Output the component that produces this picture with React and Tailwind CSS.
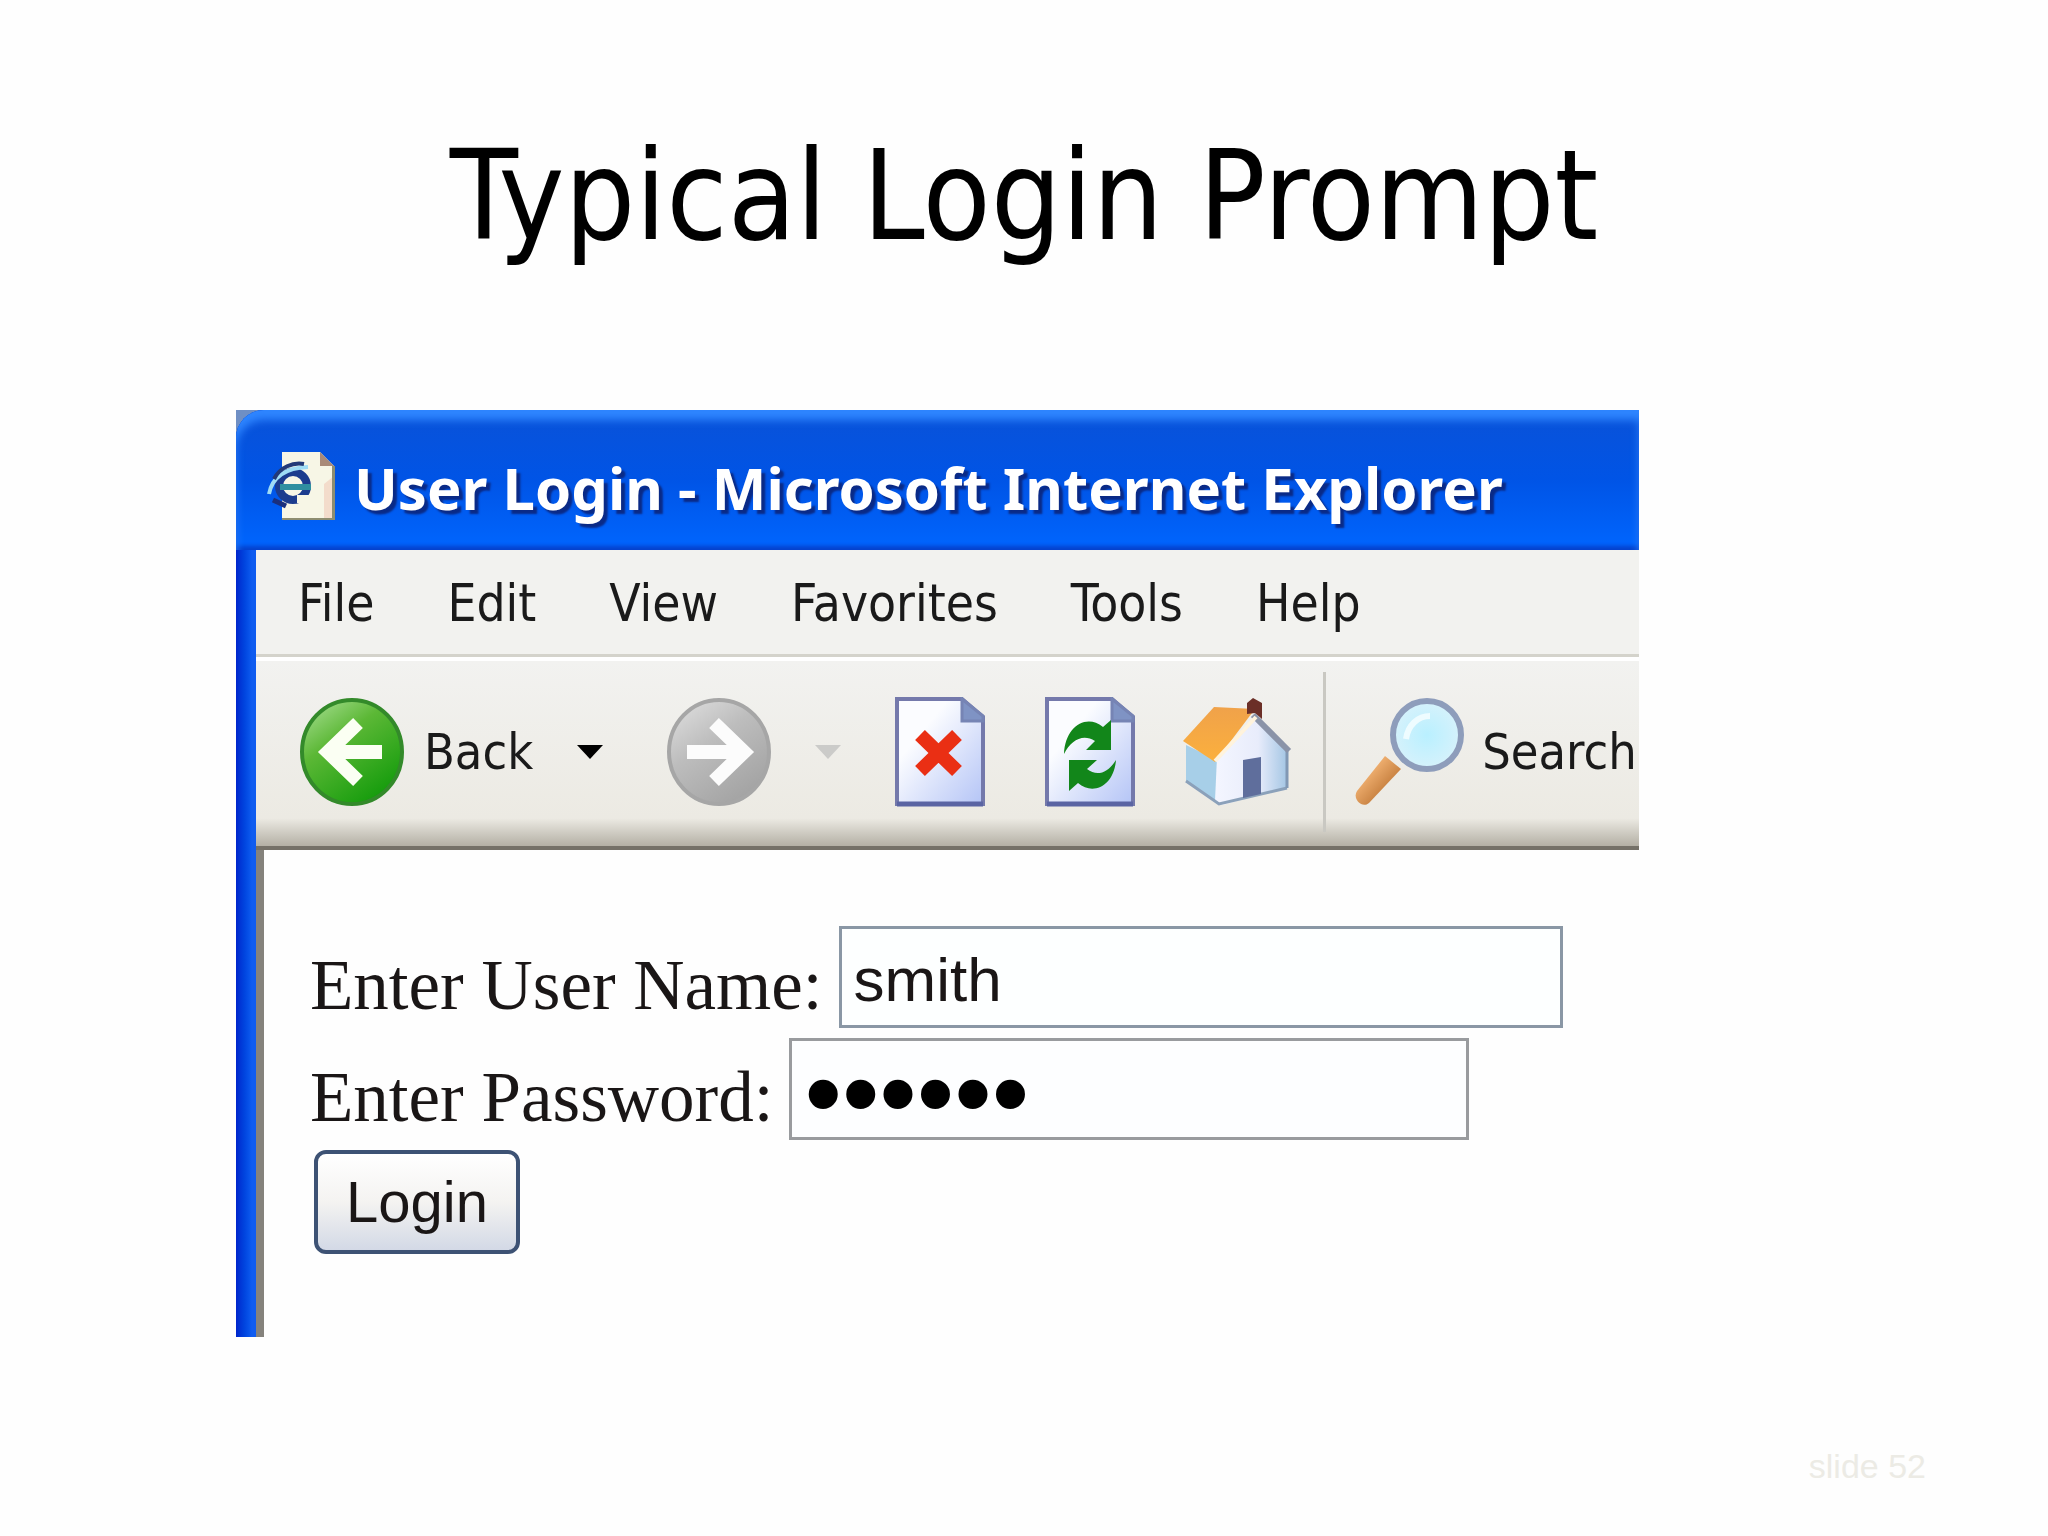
import { useState } from "react";

const MENU = ["File", "Edit", "View", "Favorites", "Tools", "Help"];

function PageIcon() {
  return (
    <svg viewBox="0 0 72 72" className="w-[72px] h-[72px] shrink-0" aria-hidden="true">
      <path d="M16 2H54L68 16V69H16Z" fill="#f7f6e6" />
      <path d="M54 2V16H68Z" fill="#a98a78" />
      <path d="M58 34L68 26V69H58Z" fill="#f3dccb" />
      <path d="M66 16H69V70H16V68H66Z" fill="#8d8d70" />
      <circle cx="27" cy="36" r="14" fill="none" stroke="#1c3c8e" strokeWidth="8" />
      <path d="M14 37H45" stroke="#2f8fa0" strokeWidth="6" />
      <path d="M31 45H46V53H31Z" fill="#f7f6e6" />
      <path d="M3 44C6 28 18 18 42 17" fill="none" stroke="#9fdcf5" strokeWidth="4" />
      <path d="M8 29C14 17 27 12 38 14" fill="none" stroke="#233a78" strokeWidth="4" />
      <path d="M7 50L20 56" stroke="#1a2f7c" strokeWidth="5" />
    </svg>
  );
}

function BackIcon() {
  return (
    <svg viewBox="0 0 104 108" className="w-[104px] h-[108px]" aria-hidden="true">
      <defs>
        <linearGradient id="back" x1="0.15" y1="0.05" x2="0.75" y2="0.95">
          <stop offset="0" stopColor="#9bd883" />
          <stop offset="0.35" stopColor="#5cb836" />
          <stop offset="1" stopColor="#159c0c" />
        </linearGradient>
      </defs>
      <ellipse cx="52" cy="54" rx="50" ry="52" fill="url(#back)" stroke="#338a2a" strokeWidth="4" />
      <path d="M82 54H28M58 25L28 54L58 83" fill="none" stroke="#fbfff3" strokeWidth="14" />
    </svg>
  );
}

function ForwardIcon() {
  return (
    <svg viewBox="0 0 104 108" className="w-[104px] h-[108px]" aria-hidden="true">
      <defs>
        <linearGradient id="forward" x1="0.15" y1="0.05" x2="0.75" y2="0.95">
          <stop offset="0" stopColor="#dadada" />
          <stop offset="0.4" stopColor="#bdbdbd" />
          <stop offset="1" stopColor="#a3a3a3" />
        </linearGradient>
      </defs>
      <ellipse cx="52" cy="54" rx="50" ry="52" fill="url(#forward)" stroke="#a6a6a6" strokeWidth="4" />
      <path d="M20 54H76M47 25L77 54L47 83" fill="none" stroke="#fcfcfc" strokeWidth="14" />
    </svg>
  );
}

function Sheet({ children }) {
  return (
    <svg viewBox="0 0 90 110" className="w-[90px] h-[110px]" aria-hidden="true">
      <defs>
        <linearGradient id="sheet" x1="0" y1="0" x2="1" y2="1">
          <stop offset="0.3" stopColor="#fbfcff" />
          <stop offset="1" stopColor="#b4c4f6" />
        </linearGradient>
      </defs>
      <path d="M2 2H67L88 20V107H2Z" fill="url(#sheet)" stroke="#7479ab" strokeWidth="4" />
      <path d="M67 2V24H88V19Z" fill="#7f93c4" stroke="#7684b4" strokeWidth="3" />
      <path d="M2 107H88" stroke="#5a64a3" strokeWidth="5" />
      {children}
    </svg>
  );
}

function StopIcon() {
  return (
    <Sheet>
      <path d="M25 38L62 74M62 38L25 74" stroke="#ea2f14" strokeWidth="14" />
    </Sheet>
  );
}

function RefreshIcon() {
  return (
    <Sheet>
      <path d="M19 57C20 30 41 16 58 30L66 23V53H41L50 44C38 36 26 43 19 57Z" fill="#12861a" />
      <path d="M71 63C69 89 48 99 33 86L24 94V63H52L42 72C52 80 63 76 71 63Z" fill="#12861a" />
    </Sheet>
  );
}

function HomeIcon() {
  return (
    <svg viewBox="0 0 112 114" className="w-[112px] h-[114px]" aria-hidden="true">
      <defs>
        <linearGradient id="roof" x1="0" y1="0" x2="0" y2="1">
          <stop offset="0" stopColor="#f0a24a" />
          <stop offset="1" stopColor="#fbb03d" />
        </linearGradient>
        <linearGradient id="wall" x1="0" y1="0" x2="1" y2="0">
          <stop offset="0" stopColor="#f4f6ff" />
          <stop offset="0.6" stopColor="#e8ecfb" />
          <stop offset="1" stopColor="#a4c6e4" />
        </linearGradient>
      </defs>
      <path d="M5 50L38 66V110L5 86Z" fill="#a7cfe8" />
      <path d="M36 62L74 24L106 56V92L42 110L34 106Z" fill="url(#wall)" />
      <path d="M5 86L38 109L106 93" fill="none" stroke="#8ba1ba" strokeWidth="3" />
      <path d="M106 54V93" stroke="#8198b4" strokeWidth="3" />
      <path d="M62 65L80 62V99L62 103Z" fill="#5f6e9c" />
      <path d="M72 20L108 56" stroke="#8a93a8" strokeWidth="6" />
      <path d="M2 46L33 12L74 14L34 67Z" fill="url(#roof)" />
      <path d="M34 66L75 22" stroke="#fff3dc" strokeWidth="4" />
      <path d="M66 8L72 3L81 8V24L74 18L66 19Z" fill="#6b2f27" />
    </svg>
  );
}

function SearchIcon() {
  return (
    <svg viewBox="0 0 112 114" className="w-[112px] h-[114px] shrink-0" aria-hidden="true">
      <defs>
        <radialGradient id="lens" cx="0.5" cy="0.5" r="0.55">
          <stop offset="0" stopColor="#b9f0ff" />
          <stop offset="1" stopColor="#d9f2fb" />
        </radialGradient>
        <linearGradient id="grip" x1="0.2" y1="0.2" x2="0.8" y2="0.8">
          <stop offset="0" stopColor="#fbbd7e" />
          <stop offset="1" stopColor="#b9702f" />
        </linearGradient>
      </defs>
      <path d="M31 61L47 74L15 108C8 114 -2 104 3 96Z" fill="url(#grip)" />
      <circle cx="73" cy="40" r="34" fill="url(#lens)" stroke="#8e9dbb" strokeWidth="6" />
      <path d="M52 44C54 30 64 21 76 21" fill="none" stroke="#eefcff" strokeWidth="6" />
    </svg>
  );
}

function Caret({ className }) {
  return (
    <svg viewBox="0 0 26 14" className={className} aria-hidden="true">
      <path d="M0 0H26L13 14Z" fill="currentColor" />
    </svg>
  );
}

export default function App() {
  const [user, setUser] = useState("smith");
  const [password, setPassword] = useState("secret");

  return (
    <div className="min-h-screen flex flex-col bg-[#fefefe] text-black">
      <h1 className="pt-[110px] text-center text-[124px] leading-[172px] font-['DejaVu_Sans_Condensed','DejaVu_Sans',sans-serif]">
        Typical Login Prompt
      </h1>

      <main className="mt-[128px] ml-[236px] w-[68.5%] bg-[#6f8fc4] overflow-hidden">
        <div className="bg-[#0a50e6] rounded-tl-[28px]">
          <header className="h-[140px] pl-[30px] pt-3 flex items-center gap-4 rounded-tl-[28px] bg-linear-to-b from-[#0a52d8] via-[#0054e6] to-[#0066ff] shadow-[inset_0_10px_8px_#2f86ff,inset_0_-4px_4px_#0540cc]">
            <PageIcon />
            <h2 className="pt-1 text-white font-bold text-[58px] leading-[72px] whitespace-nowrap font-['Noto_Sans',sans-serif] [text-shadow:4px_4px_2px_#0a2a86]">
              User Login - Microsoft Internet Explorer
            </h2>
          </header>

          <div className="pl-5 bg-linear-to-r from-[#0024cc] from-0% via-[#0f5cf0] via-[16px] to-[#0f5cf0] to-[20px]">
            <div className="bg-[#f2f2ef] font-['DejaVu_Sans_Condensed','DejaVu_Sans',sans-serif] text-[50px] leading-[64px] text-[#1a1a1a]">
              <nav className="h-[107px] pl-[42px] pt-1 flex items-center gap-[73px] border-b-3 border-[#d4d3cb] text-[51px]">
                {MENU.map((item) => (
                  <button key={item} type="button">
                    {item}
                  </button>
                ))}
              </nav>

              <div className="h-[193px] pl-[44px] pb-1 flex items-center overflow-hidden whitespace-nowrap border-t-4 border-t-white border-b-4 border-b-[#757168] bg-linear-to-b from-[#f2f2f0] via-[#eceae3] via-85% to-[#b4b0a5]">
                <button type="button" className="shrink-0 flex items-center gap-5">
                  <BackIcon />
                  Back
                </button>
                <button type="button" aria-label="Back history" className="shrink-0 ml-[44px]">
                  <Caret className="w-[26px] h-[14px] text-black" />
                </button>
                <button type="button" aria-label="Forward" className="shrink-0 ml-[64px]">
                  <ForwardIcon />
                </button>
                <button type="button" aria-label="Forward history" className="shrink-0 ml-[44px]">
                  <Caret className="w-[26px] h-[14px] text-[#cbcbc9]" />
                </button>
                <button type="button" aria-label="Stop" className="shrink-0 ml-[54px]">
                  <StopIcon />
                </button>
                <button type="button" aria-label="Refresh" className="shrink-0 ml-[60px]">
                  <RefreshIcon />
                </button>
                <button type="button" aria-label="Home" className="shrink-0 ml-[46px]">
                  <HomeIcon />
                </button>
                <span className="shrink-0 ml-[30px] w-[3px] h-[160px] bg-[#c9c8c2]" />
                <button type="button" className="shrink-0 ml-[28px] flex items-center gap-4">
                  <SearchIcon />
                  Search
                </button>
              </div>
            </div>

            <form
              onSubmit={(e) => e.preventDefault()}
              className="h-[487px] pt-[76px] pl-[46px] flex flex-col items-start gap-[10px] bg-[#fefefe] border-l-8 border-[#85827c] font-['Liberation_Serif',serif] text-[71px] leading-[80px] text-[#1a1616]"
            >
              <div className="flex items-center gap-4">
                <label htmlFor="user" className="pt-4">Enter User Name:</label>
                <input
                  id="user"
                  type="text"
                  value={user}
                  onChange={(e) => setUser(e.target.value)}
                  className="w-[724px] h-[102px] px-3 pt-1 border-3 border-[#8a97a5] bg-[#fdffff] font-['Liberation_Sans',sans-serif] text-[62px]"
                />
              </div>
              <div className="flex items-center gap-4">
                <label htmlFor="password" className="pt-4">Enter Password:</label>
                <input
                  id="password"
                  type="password"
                  value={password}
                  onChange={(e) => setPassword(e.target.value)}
                  className="w-[680px] h-[102px] px-3 pt-2 border-3 border-[#999b9e] bg-[#fdfeff] text-black font-['Liberation_Sans',sans-serif] text-[107px]"
                />
              </div>
              <button
                type="submit"
                className="ml-1 w-[206px] h-[104px] rounded-xl border-4 border-[#3d5274] bg-linear-to-b from-white via-[#f4f3f1] to-[#d3d9e6] font-['Liberation_Sans',sans-serif] text-[58px]"
              >
                Login
              </button>
            </form>
          </div>
        </div>
      </main>

      <footer className="mt-auto pb-[50px] pr-[122px] text-right text-[34px] leading-[40px] text-[#ecebe5] font-['Liberation_Sans',sans-serif]">
        slide 52
      </footer>
    </div>
  );
}
